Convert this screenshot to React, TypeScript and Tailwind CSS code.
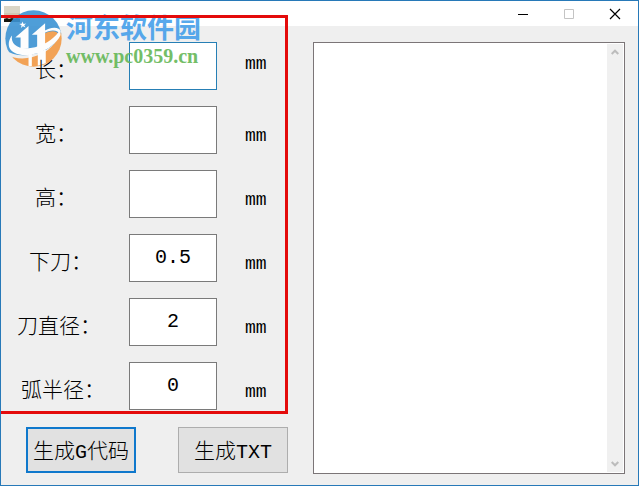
import { useState } from 'react';

// single character labels sit further right than the long ones
const fields = [
    { id: "length", label: "长：", value: "", labelClass: "pl-[34px]", active: true },
    { id: "width", label: "宽：", value: "", labelClass: "pl-[34px]", active: false },
    { id: "height", label: "高：", value: "", labelClass: "pl-[34px]", active: false },
    { id: "plunge", label: "下刀：", value: "0.5", labelClass: "pl-7", active: false },
    { id: "diameter", label: "刀直径：", value: "2", labelClass: "pl-4", active: false },
    { id: "radius", label: "弧半径：", value: "0", labelClass: "pl-5", active: false }
];

function TitleBar() {
    return (
        <header className="flex h-[25px] items-center justify-between bg-white pl-[3px] pr-[17px]">
            <svg className="size-4" viewBox="0 0 16 16" aria-hidden="true">
                <rect width="16" height="16" fill="#cfc8b4" />
                <path d="M0 0h16v7H0z" fill="#d9d5c6" />
                <path d="M0 13l3-1 2 1 3-1 3 1 2-1 3 1v3H0z" fill="#17160f" />
            </svg>
            <div className="flex items-center gap-[34px]">
                <button type="button" aria-label="最小化">
                    <svg className="size-3" viewBox="0 0 12 12" fill="none" stroke="#000">
                        <path d="M1 6.5h10" />
                    </svg>
                </button>
                <button type="button" aria-label="最大化" disabled>
                    <svg className="size-3" viewBox="0 0 12 12" fill="none" stroke="#c4c4c4">
                        <path d="M1.5 1.5h9v9h-9z" />
                    </svg>
                </button>
                <button type="button" aria-label="关闭">
                    <svg className="size-3" viewBox="0 0 12 12" fill="none" stroke="#000" strokeWidth="1.2">
                        <path d="M1 1l10 10M11 1L1 11" />
                    </svg>
                </button>
            </div>
        </header>
    )
}

function Watermark() {
    return (
        <div className="pointer-events-none absolute left-1 top-[9px] flex gap-1 opacity-90">
            <svg className="size-[57px]" viewBox="15 15 172 172" aria-hidden="true">
                <clipPath id="disc">
                    <circle cx="101" cy="101" r="85" />
                </clipPath>
                {/* blue half, orange half, then the white towers and the sweep */}
                <g clipPath="url(#disc)">
                    <path d="M10 10h180v70c-20 40-50 60-90 68-36 8-64 4-90-18z" fill="#3d94d4" />
                    <path d="M190 60v130H20v-40c30 16 70 14 104-2 34-18 54-40 66-88z" fill="#f39a45" />
                    <path d="M134 86c20-10 38-8 42 2-6 20-22 34-46 42z" fill="#f39a45" />
                    <path d="M36 92c-4 26 16 42 56 38 38-6 68-26 84-48 6 0 8 4 6 10-12 24-36 42-66 52-44 14-78 6-88-16-4-12 0-26 8-36z" fill="#fff" />
                    <path d="M130 80c22-14 48-16 54 0l-4 10c-4-16-26-18-50-4z" fill="#fff" />
                </g>
                <path d="M46 98l40-35v68H62V98z" fill="#fff" />
                <path d="M96 90l40-35v72l-24 7V90z" fill="#fff" />
                <path d="M86 146h10v38H86zM114 142l24-8v42l-24 7z" fill="#fff" />
                <path d="M68 50l3 7 8-1-6 5 4 7-8-4-6 5 2-8-7-4 8-1z" fill="#fff" />
            </svg>
            <div>
                <p className="whitespace-nowrap text-[27px] leading-[34px] font-bold text-[#46a0ea]">河东软件园</p>
                <p className="font-['Liberation_Serif',serif] text-xl leading-6 font-bold text-[#65b757]">www.pc0359.cn</p>
            </div>
        </div>
    )
}

export default function App() {
    const [values, setValues] = useState(fields.map(field => field.value));
    const [output, setOutput] = useState("");
    const latinClass = "font-['Liberation_Mono',monospace]";

    const changeValue = (index: number, value: string) =>
        setValues(values.map((old, i) => i === index ? value : old));

    return (
        <div className="relative flex min-h-screen flex-col overflow-hidden border border-[#2779b8] bg-[#efefef] font-['Noto_Sans_CJK_SC',sans-serif] text-black">
            <TitleBar />
            <main className="flex flex-1 gap-[25px] pt-4 pr-[13px] pb-[11px]">
                <form className="w-[287px] shrink-0" onSubmit={ (e) => e.preventDefault() }>
                    <div className="relative flex flex-col gap-4">
                        { fields.map((field, index) =>
                            <div key={ field.id } className="flex h-12">
                                <label htmlFor={ field.id } className={ `relative z-10 w-32 shrink-0 whitespace-nowrap pt-2 text-[21px] leading-9 font-light ${ field.labelClass }` }>
                                    { field.label }
                                </label>
                                <input
                                    id={ field.id }
                                    value={ values[index] }
                                    onChange={ (e) => changeValue(index, e.target.value) }
                                    className={ `w-[88px] border bg-white text-center font-['Liberation_Mono',monospace] text-xl outline-none ${ field.active ? "border-[#267fb5]" : "border-[#7a7a7a]" }` }
                                />
                                <span className={ `${ latinClass } pl-7 text-lg ${ field.active ? "pt-2" : "pt-4" }` }>mm</span>
                            </div>
                        )}
                        {/* highlight round the parameters */}
                        <div className="pointer-events-none absolute -top-[27px] -bottom-1 -left-1 right-0 z-10 border-[3px] border-[#e40b0b]" />
                    </div>
                    <div className="mt-[17px] flex justify-between pl-[25px]">
                        <button type="submit" className="h-[46px] w-[110px] whitespace-nowrap border-2 border-[#0f78cc] bg-[#e1e1e1] text-[21px] font-light">
                            生成<span className={ `${ latinClass } text-xl` }>G</span>代码
                        </button>
                        <button type="button" className="h-[46px] w-[110px] whitespace-nowrap border border-[#adadad] bg-[#e1e1e1] text-[21px] font-light">
                            生成<span className={ `${ latinClass } text-xl` }>TXT</span>
                        </button>
                    </div>
                </form>
                <div className="flex flex-1 border border-[#7b7577] bg-white p-px">
                    <textarea
                        aria-label="代码"
                        value={ output }
                        onChange={ (e) => setOutput(e.target.value) }
                        className="min-w-0 flex-1 resize-none p-1 text-base outline-none"
                    />
                    <div className="flex w-4 flex-col items-center justify-between bg-[#f0f0f0] py-1">
                        <svg className="size-2" viewBox="0 0 8 8" fill="none" stroke="#bcbcbc" strokeWidth="2" aria-hidden="true">
                            <path d="M.7 6L4 2.7 7.3 6" />
                        </svg>
                        <svg className="size-2" viewBox="0 0 8 8" fill="none" stroke="#bcbcbc" strokeWidth="2" aria-hidden="true">
                            <path d="M.7 2L4 5.3 7.3 2" />
                        </svg>
                    </div>
                </div>
            </main>
            <Watermark />
        </div>
    )
}
